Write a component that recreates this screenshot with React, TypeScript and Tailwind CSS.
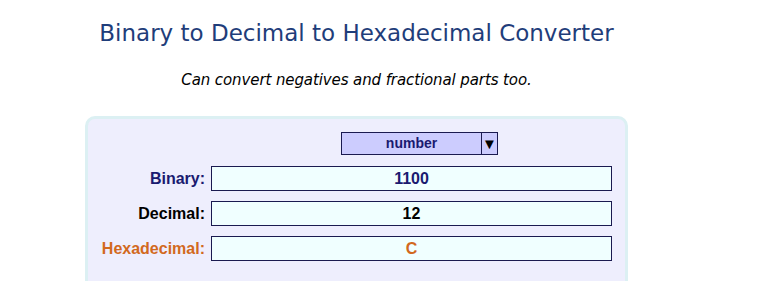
export default function App() {
  const rows = [
    { label: "Binary:", value: "1100", color: "text-[#1a1a70]" },
    { label: "Decimal:", value: "12", color: "text-black" },
    { label: "Hexadecimal:", value: "C", color: "text-[#d2691e]" },
  ];

  return (
    <div className="h-[281px] overflow-hidden bg-white">
      <div className="w-[713px]">
        <h1 className="mt-[19px] text-center font-['DejaVu_Sans',sans-serif] text-[23px] leading-[28px] text-[#1f3d7a]">
          Binary to Decimal to Hexadecimal Converter
        </h1>
        <p className="mt-[24px] text-center font-['DejaVu_Sans',sans-serif] text-[15px] italic leading-[18px] tracking-[-0.1px] text-black">
          Can convert negatives and fractional parts too.
        </p>

        <div className="mx-[85px] mt-[27px] h-[180px] rounded-[10px] border-[3px] border-[#dcf0f3] bg-[#eeeefd] pt-[13px] font-['Liberation_Sans',Arial,sans-serif]">
          <div className="flex">
            <div className="w-[123px] shrink-0" />
            <div className="ml-[130px] flex h-[23px] w-[157px] border border-[#1a1a50] bg-[#ccccfe]">
              <div className="flex flex-1 items-center justify-center text-[14px] font-bold text-[#1a1a70]">
                number
              </div>
              <div className="flex w-[16px] items-center justify-center border-l border-[#1a1a50] text-[15px] leading-none text-black">
                ▼
              </div>
            </div>
          </div>

          <div className="mt-[11px] flex flex-col gap-[10px]">
            {rows.map((r) => (
              <div key={r.label} className="flex items-center">
                <div className={`w-[117px] shrink-0 text-right text-[16px] font-bold ${r.color}`}>
                  {r.label}
                </div>
                <div className={`ml-[6px] flex h-[25px] w-[401px] items-center justify-center border border-[#1a1a50] bg-[#f0ffff] text-[16px] font-bold ${r.color}`}>
                  {r.value}
                </div>
              </div>
            ))}
          </div>
        </div>
      </div>
    </div>
  );
}
